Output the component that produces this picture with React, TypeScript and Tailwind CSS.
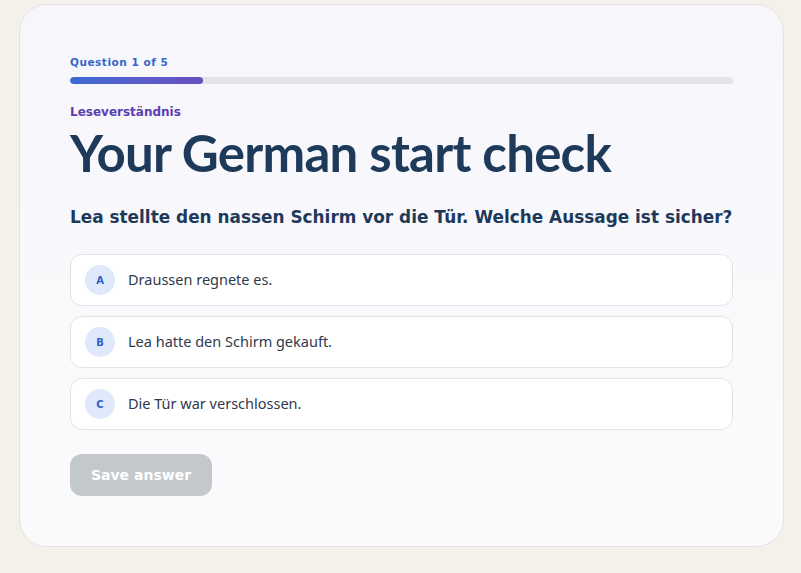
import React from "react";

type Option = { key: string; text: string };

const options: Option[] = [
  { key: "A", text: "Draussen regnete es." },
  { key: "B", text: "Lea hatte den Schirm gekauft." },
  { key: "C", text: "Die Tür war verschlossen." },
];

const OptionRow = ({ option }: { option: Option }) => {
  return (
    <button className="flex items-center w-full h-[52px] px-[14px] gap-[13px] bg-white border border-[#e1e3e8] rounded-[12px] text-left">
      <span className="flex items-center justify-center w-[30px] h-[30px] rounded-full bg-[#dfe9fb] text-[#2f5fc8] text-[10px] font-bold font-['DejaVu_Sans',sans-serif]">
        {option.key}
      </span>
      <span className="text-[14.5px] text-[#2f3a4c]">{option.text}</span>
    </button>
  );
};

export default function App() {
  return (
    <div className="w-[801px] h-[573px] bg-[#f3f1ea] pl-[19px] pt-[4px] font-['Noto_Sans',sans-serif]">
      <div className="w-[765px] h-[543px] bg-gradient-to-b from-[#f7f6fb] to-[#fbfafb] border border-[#e4e2e6] rounded-[28px] px-[50px] pt-[50px]">
        <p className="text-[10.5px] leading-[14px] font-bold tracking-[0.05em] text-[#3366cc] font-['DejaVu_Sans',sans-serif]">
          Question 1 of 5
        </p>
        <div className="mt-[8px] h-[7px] w-full bg-[#e3e4e8] rounded-full overflow-hidden">
          <div className="h-full w-[20%] rounded-full bg-gradient-to-r from-[#3a6bd4] to-[#6b4fc0]" />
        </div>
        <p className="mt-[20px] text-[12px] leading-[16px] font-bold text-[#5a3fb0] font-['DejaVu_Sans',sans-serif]">
          Leseverständnis
        </p>
        <h1 className="mt-[5px] text-[51px] leading-[56px] font-bold tracking-[-0.015em] text-[#1e3a5a] font-['Lato',sans-serif]">
          Your German start check
        </h1>
        <p className="mt-[24px] text-[16.9px] leading-[24px] font-bold whitespace-nowrap text-[#1e3a5a] font-['DejaVu_Sans',sans-serif]">
          Lea stellte den nassen Schirm vor die Tür. Welche Aussage ist sicher?
        </p>
        <div className="mt-[25px] flex flex-col gap-[10px]">
          {options.map((o) => (
            <OptionRow key={o.key} option={o} />
          ))}
        </div>
        <button className="mt-[24px] w-[142px] h-[42px] rounded-[12px] bg-[#c3c8cc] text-white text-[14px] font-bold font-['DejaVu_Sans',sans-serif]">
          Save answer
        </button>
      </div>
    </div>
  );
}
